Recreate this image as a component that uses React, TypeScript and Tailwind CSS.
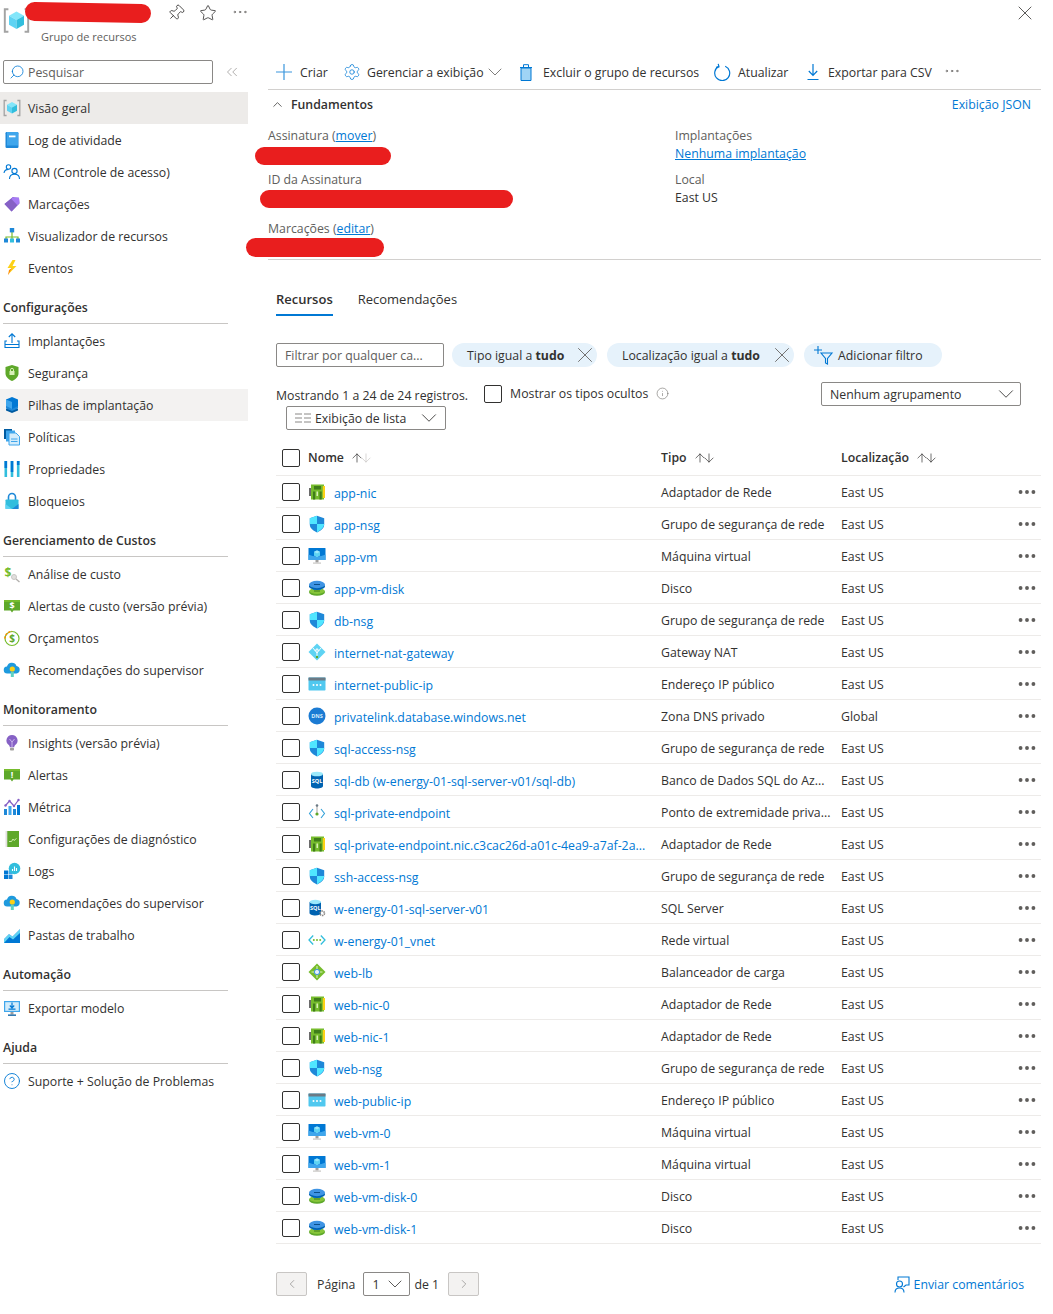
import React from 'react';
import { ArrowDown, ArrowUp, ChevronDown, ChevronLeft, ChevronRight, ChevronUp, ChevronsLeft, CircleHelp, Ellipsis, Info, Pin, Search, Settings, Star, X } from 'lucide-react';

type IconProps = { className?: string };

const Svg = ({ children, size = 18 }: { children: React.ReactNode; size?: number }) => (
  <svg width={size} height={size} viewBox="0 0 18 18" className="shrink-0">{children}</svg>
);

const CubeGroup = ({ size = 18 }: { size?: number }) => (
  <Svg size={size}>
    <path d="M3.600 1.500H1.200v15h2.400M14.400 1.500h2.400v15h-2.400" fill="none" stroke="#a3a3a3" strokeWidth="1.300" />
    <path d="M9 3l5 2.800L9 8.600 4 5.800z" fill="#83e6fa" />
    <path d="M4 5.800l5 2.800v6L4 11.800z" fill="#5ed3f3" />
    <path d="M14 5.800L9 8.600v6l5-2.800z" fill="#32bedd" />
  </Svg>
);
const LogIcon = () => (
  <Svg>
    <rect x="2.500" y="1" width="13" height="16" rx="1.200" fill="#1e88d8" />
    <rect x="4" y="1" width="11" height="13.500" fill="#3fa6ec" />
    <rect x="6" y="4.500" width="6.500" height="1.800" fill="#ffffff" />
  </Svg>
);
const IamIcon = () => (
  <Svg>
    <circle cx="5.500" cy="4" r="2.200" fill="none" stroke="#0078d4" strokeWidth="1.100" />
    <path d="M1 10c.4-2.400 2-3.600 4.500-3.600" fill="none" stroke="#0078d4" strokeWidth="1.100" />
    <circle cx="11.500" cy="8" r="2.600" fill="none" stroke="#0078d4" strokeWidth="1.100" />
    <path d="M6.500 16c0-3.200 2-4.800 5-4.800s5 1.600 5 4.800" fill="none" stroke="#0078d4" strokeWidth="1.100" />
  </Svg>
);
const TagIcon = () => (
  <Svg>
    <path d="M1.500 9L9.500 2.200l6.500.5.4 5.600-7.800 8.200z" fill="#7f5fd0" />
    <path d="M1.500 9l7 7.500 7.900-8.200-6-6.400z" fill="#8661c5" />
    <path d="M9.500 2.200l6.500.5.4 5.600-2 2-6-6.400z" fill="#a67af4" />
  </Svg>
);
const GraphIcon = () => (
  <Svg>
    <path d="M9 5v6M3 12.500V10h12v2.500M9 9.500v3" fill="none" stroke="#76bc2d" strokeWidth="1.200" />
    <rect x="6.800" y="1" width="4.400" height="4.400" fill="#1e88d8" />
    <rect x="1" y="11.500" width="4" height="4" fill="#1e88d8" />
    <rect x="7" y="11.500" width="4" height="4" fill="#32bedd" />
    <rect x="13" y="11.500" width="4" height="4" fill="#1e88d8" />
  </Svg>
);
const BoltIcon = () => (
  <Svg>
    <path d="M9.500 1L4.500 9h4l-3 6 8-8h-4l3-6z" fill="#fcd116" />
    <path d="M9 9l-3.500 6.500L5 16l1-5z" fill="#ff8c00" />
  </Svg>
);
const UploadIcon = () => (
  <Svg>
    <path d="M9 11V2M5.800 5L9 1.800 12.200 5" fill="none" stroke="#0078d4" strokeWidth="1.100" />
    <path d="M4 9H2v6.500h14V9h-2" fill="none" stroke="#0078d4" strokeWidth="1.100" />
    <path d="M2 12.500h14" stroke="#0078d4" strokeWidth="1" />
  </Svg>
);
const ShieldLock = () => (
  <Svg>
    <path d="M9 1l6.500 2v6.500c0 3.500-3.300 6-6.500 7.500-3.200-1.500-6.500-4-6.500-7.500V3z" fill="#5ea82a" />
    <rect x="6.500" y="7" width="5" height="4" fill="#d8f0b8" />
    <path d="M7.500 7V5.800a1.500 1.500 0 013 0V7" fill="none" stroke="#d8f0b8" />
  </Svg>
);
const StackIcon = () => (
  <Svg>
    <path d="M9 10.500l6 2.500v1.500L9 17l-6-2.500V13z" fill="#005ba1" />
    <path d="M9 6.500l6 2.500v3.500L9 15l-6-2.500V9z" fill="#1e88d8" />
    <path d="M9 1l6 2.500v6.500l-6 3-6-3V3.500z" fill="#0078d4" />
    <path d="M3 3.500l6 2.500v7l-6-3z" fill="#3fa6ec" />
  </Svg>
);
const PolicyIcon = () => (
  <Svg>
    <rect x="1" y="1" width="8" height="10" fill="#005ba1" />
    <rect x="3" y="2.500" width="9" height="11" fill="#3fa6ec" />
    <path d="M6 5h7l3.500 3.500V17H6z" fill="#d3ecfb" stroke="#3fa6ec" />
    <path d="M8 11h6.500M8 13.500h6.500" stroke="#3fa6ec" />
  </Svg>
);
const PropsIcon = () => (
  <Svg>
    <rect x="1.500" y="1" width="2.600" height="16" fill="#32bedd" />
    <rect x="1.500" y="1" width="2.600" height="7" fill="#0078d4" />
    <rect x="7.700" y="1" width="2.600" height="16" fill="#32bedd" />
    <rect x="7.700" y="1" width="2.600" height="11" fill="#0078d4" />
    <rect x="13.900" y="1" width="2.600" height="16" fill="#32bedd" />
    <rect x="13.900" y="1" width="2.600" height="4" fill="#0078d4" />
  </Svg>
);
const LockIcon = () => (
  <Svg>
    <path d="M5.500 8V5a3.500 3.500 0 017 0v3" fill="none" stroke="#1e88d8" strokeWidth="1.600" />
    <rect x="2.500" y="7.500" width="13" height="9.500" rx="0.800" fill="#32bedd" />
    <path d="M2.500 12l6.500 5H2.500z" fill="#5ed3f3" />
    <path d="M15.500 12L9 17h6.500z" fill="#1e88d8" />
  </Svg>
);
const CostIcon = () => (
  <Svg>
    <text x="5" y="11.500" textAnchor="middle" fontSize="12" fontWeight="700" fill="#76bc2d" fontFamily="Open Sans, sans-serif">$</text>
    <circle cx="11" cy="12" r="2.500" fill="#e1dfdd" stroke="#c8c6c4" />
    <path d="M13 14l3.500 3" stroke="#b3b0ad" strokeWidth="1.400" />
  </Svg>
);
const Flag = ({ mark }: { mark: string }) => (
  <Svg>
    <path d="M1 3h16v10.500H10.500L9 15.500l-1.500-2H1z" fill="#5ea82a" />
    <path d="M1 3h16v2H1z" fill="#76bc2d" />
    <text x="9" y="12" textAnchor="middle" fontSize="9" fontWeight="700" fill="#ffffff" fontFamily="Open Sans, sans-serif">{mark}</text>
  </Svg>
);
const BudgetIcon = () => (
  <Svg>
    <circle cx="9" cy="9.500" r="7" fill="none" stroke="#76bc2d" strokeWidth="1.200" />
    <path d="M2 9.500A7 7 0 019 2.500" fill="none" stroke="#ff8c00" strokeWidth="1.600" strokeDasharray="2 1.500" />
    <text x="9" y="13" textAnchor="middle" fontSize="10" fontWeight="700" fill="#5ea82a" fontFamily="Open Sans, sans-serif">$</text>
  </Svg>
);
const AdvisorIcon = () => (
  <Svg>
    <path d="M4.500 12.500a3.500 3.500 0 01-.5-7 5 5 0 019.500-.5 3.800 3.800 0 010 7.500z" fill="#1e9ade" />
    <circle cx="9.300" cy="8" r="2.600" fill="#fcd116" />
    <path d="M7.800 11h3v5h-3z" fill="#5ed3c3" />
  </Svg>
);
const BulbIcon = () => (
  <Svg>
    <path d="M9 1a5.500 5.500 0 00-3.200 10c.7.6 1 1.300 1 2.200h4.400c0-.9.3-1.600 1-2.200A5.500 5.500 0 009 1z" fill="#8661c5" />
    <path d="M6.500 5l2.500 3 2.500-3M9 8v5" fill="none" stroke="#d9c8f5" strokeWidth="0.800" />
    <rect x="7" y="13.800" width="4" height="2.800" rx="0.800" fill="#a19f9d" />
  </Svg>
);
const MetricsIcon = () => (
  <Svg>
    <rect x="1" y="11" width="3" height="6" fill="#1e88d8" />
    <rect x="5.500" y="8" width="3" height="9" fill="#3fa6ec" />
    <rect x="10" y="11" width="3" height="6" fill="#1e88d8" />
    <rect x="14" y="7" width="3" height="10" fill="#0078d4" />
    <path d="M2.500 7.500L6.500 3l4.500 5L15.500 2" fill="none" stroke="#8661c5" strokeWidth="1.200" />
    <circle cx="2.500" cy="7.500" r="1.200" fill="#8661c5" />
    <circle cx="6.500" cy="3" r="1.200" fill="#8661c5" />
    <circle cx="11" cy="8" r="1.200" fill="#8661c5" />
    <circle cx="15.500" cy="2" r="1.200" fill="#8661c5" />
  </Svg>
);
const DiagIcon = () => (
  <Svg>
    <rect x="3" y="1" width="13" height="16" fill="#5ea82a" />
    <rect x="2.500" y="1" width="1.800" height="16" fill="#e1dfdd" />
    <path d="M6 11.500h2.500l1.500-2.500 1 1.500 2.500-2" fill="none" stroke="#d8f0b8" strokeWidth="0.900" />
  </Svg>
);
const LogsIcon = () => (
  <Svg>
    <rect x="1" y="8.500" width="4" height="4" fill="#0078d4" />
    <rect x="1" y="13" width="4" height="4" fill="#0078d4" />
    <rect x="5.500" y="13" width="4" height="4" fill="#1e88d8" />
    <rect x="5.500" y="8.500" width="4" height="4" fill="#3fa6ec" />
    <circle cx="11.500" cy="6.500" r="5.800" fill="#32bedd" />
    <path d="M9.500 9V7M11.500 9V4.500M13.500 9V6" stroke="#ffffff" strokeWidth="1.100" />
  </Svg>
);
const WorkbookIcon = () => (
  <Svg>
    <path d="M1 1h16v16H1z" fill="#0078d4" />
    <path d="M1 13l5-5 3.500 2.500L17 3v4l-7 6.500-3.500-2.500L1 17z" fill="#5ed3f3" />
    <path d="M1 1h16v2L9.500 10.500 6 8l-5 5z" fill="#ffffff" />
  </Svg>
);
const ExportIcon = () => (
  <Svg>
    <rect x="1" y="2" width="16" height="11" fill="#3fa6ec" />
    <rect x="2.200" y="3.200" width="13.600" height="8.600" fill="#d3ecfb" />
    <path d="M9 3.500v5M6.800 6.500L9 8.800l2.200-2.300M5.500 10.200h7" fill="none" stroke="#0078d4" strokeWidth="1.200" />
    <path d="M7.500 13h3v2.500h-3z" fill="#a19f9d" />
    <rect x="5" y="15.500" width="8" height="1.300" fill="#005ba1" />
  </Svg>
);

const NicIcon = () => (
  <Svg>
    <rect x="1" y="5" width="2" height="8" fill="#6b6b6b" />
    <rect x="3" y="1.500" width="13" height="15" fill="#76bc2d" />
    <rect x="14.800" y="3" width="2.200" height="12" fill="#fcd116" />
    <rect x="6" y="3" width="7" height="3.500" fill="#3f7d1a" />
    <rect x="5" y="8.500" width="2.200" height="8" fill="#3f7d1a" />
    <rect x="8.500" y="8.500" width="1.500" height="4.500" fill="#d8f0b8" />
    <rect x="11.500" y="8.500" width="2.200" height="8" fill="#3f7d1a" />
  </Svg>
);
const NsgIcon = () => (
  <Svg>
    <path d="M9 .8l7.200 2.400v6.200c0 3.900-3.600 6.400-7.200 8-3.600-1.600-7.200-4.100-7.200-8V3.200z" fill="#1e88d8" />
    <path d="M9 .8L1.800 3.200V9H9z" fill="#50e6ff" />
    <path d="M9 9h7.200c-.3 3.700-3.700 6-7.200 8.400z" fill="#50e6ff" />
  </Svg>
);
const VmIcon = () => (
  <Svg>
    <rect x=".5" y="1" width="17" height="12" rx=".6" fill="#0078d4" />
    <path d="M.5 7.500c5 2.500 12 2.500 17 0V13H.5z" fill="#3fa6ec" />
    <path d="M9 3.200l3 1.600v3.400l-3 1.700-3-1.700V4.800z" fill="#9be9fb" />
    <path d="M6 4.800l3 1.700 3-1.700v3.400l-3 1.700-3-1.700z" fill="#5ed3f3" />
    <path d="M7.500 13h3v2.500h-3z" fill="#a19f9d" />
    <rect x="5" y="15.500" width="8" height="1.200" fill="#c8c6c4" />
  </Svg>
);
const DiskIcon = () => (
  <Svg>
    <ellipse cx="9" cy="13" rx="8" ry="3.800" fill="#5ea82a" />
    <ellipse cx="9" cy="12" rx="7.500" ry="3" fill="#86c53a" />
    <rect x="6" y="11.500" width="6" height="1" fill="#3f7d1a" />
    <rect x="5" y="6" width="8" height="5" fill="#1e88d8" />
    <ellipse cx="9" cy="7.200" rx="8" ry="3.700" fill="#0063b1" />
    <ellipse cx="9" cy="5.500" rx="8" ry="3.700" fill="#3f94e4" />
    <rect x="6" y="5" width="6" height="1" fill="#0b4f8a" />
  </Svg>
);
const NatIcon = () => (
  <Svg>
    <path d="M9 .5L17.500 9 9 17.500.5 9z" fill="#5ed3f3" />
    <path d="M9 14V6M6.800 8L9 5.500 11.200 8" fill="none" stroke="#ffffff" strokeWidth="1" />
    <path d="M5 5L9 10l4-5" fill="none" stroke="#ffffff" strokeWidth="0.900" />
    <circle cx="9" cy="14" r="1.200" fill="#5ea82a" />
  </Svg>
);
const IpIcon = () => (
  <Svg>
    <rect x=".5" y="2.500" width="17" height="13" rx=".7" fill="#50c8ef" />
    <rect x=".5" y="2.500" width="17" height="3" fill="#6b7a85" />
    <circle cx="5.500" cy="10" r="1" fill="#ffffff" />
    <circle cx="9" cy="10" r="1" fill="#ffffff" />
    <circle cx="12.500" cy="10" r="1" fill="#ffffff" />
  </Svg>
);
const DnsIcon = () => (
  <Svg>
    <circle cx="9" cy="9" r="8.500" fill="#1b7bd3" />
    <text x="9" y="11" textAnchor="middle" fontSize="5.500" fontWeight="700" fill="#d3ecfb" fontFamily="Open Sans, sans-serif">DNS</text>
  </Svg>
);
const SqlDbIcon = () => (
  <Svg>
    <path d="M3 3v12c0 1.400 2.700 2.500 6 2.500s6-1.100 6-2.500V3z" fill="#0063b1" />
    <ellipse cx="9" cy="3" rx="6" ry="2.300" fill="#9be9fb" />
    <text x="9" y="12" textAnchor="middle" fontSize="5.500" fontWeight="700" fill="#ffffff" fontFamily="Open Sans, sans-serif">SQL</text>
  </Svg>
);
const EndpointIcon = () => (
  <Svg>
    <path d="M5 6L1.500 10.500 5 15M13 6l3.500 4.500L13 15" fill="none" stroke="#32a0d8" strokeWidth="1.100" />
    <path d="M9 3v8" stroke="#a19f9d" strokeWidth="1" />
    <circle cx="9" cy="2.500" r="1.300" fill="#6b7a85" />
    <circle cx="9" cy="11" r="1.600" fill="#5ea82a" />
  </Svg>
);
const SqlServerIcon = () => (
  <Svg>
    <path d="M1.500 3v11c0 1.300 2.500 2.500 5.800 2.500s5.700-1.200 5.700-2.500V3z" fill="#0063b1" />
    <ellipse cx="7.300" cy="3" rx="5.800" ry="2.200" fill="#9be9fb" />
    <text x="7.300" y="11" textAnchor="middle" fontSize="5.500" fontWeight="700" fill="#ffffff" fontFamily="Open Sans, sans-serif">SQL</text>
    <circle cx="14.300" cy="14.300" r="2.200" fill="none" stroke="#8a8886" strokeWidth="1.600" strokeDasharray="1.400 .7" />
  </Svg>
);
const VnetIcon = () => (
  <Svg>
    <path d="M5.200 4.500L1 9l4.200 4.500M12.800 4.500L17 9l-4.200 4.500" fill="none" stroke="#32bedd" strokeWidth="1.300" />
    <circle cx="5.800" cy="9" r="1" fill="#76bc2d" />
    <circle cx="9" cy="9" r="1" fill="#76bc2d" />
    <circle cx="12.200" cy="9" r="1" fill="#76bc2d" />
  </Svg>
);
const LbIcon = () => (
  <Svg>
    <path d="M9 .5L17.500 9 9 17.500.5 9z" fill="#76bc2d" />
    <path d="M9 3v3M3.500 9h3M11.500 9h3M9 12v3" stroke="#d8f0b8" strokeWidth="1.100" />
    <circle cx="9" cy="9" r="2.600" fill="#e6f2fb" stroke="#3f94e4" />
  </Svg>
);

const PlusIcon = ({ className }: IconProps) => (
  <svg width="16" height="16" viewBox="0 0 16 16" className={className} fill="none" stroke="#3a96dd" strokeWidth="1.200">
    <path d="M0 8h16M8 0v16" />
  </svg>
);
const TrashIcon = ({ className }: IconProps) => (
  <svg width="14" height="17" viewBox="0 0 14 17" className={className}>
    <path d="M2 4h10v12.500H2z" fill="#9fd4f5" stroke="#0078d4" />
    <path d="M1 3.500h12M4.500 3V.7h5V3" fill="none" stroke="#0078d4" />
  </svg>
);
const RefreshIcon = ({ className }: IconProps) => (
  <svg width="17" height="18" viewBox="0 0 17 18" className={className} fill="none" stroke="#0078d4" strokeWidth="1.200">
    <path d="M11.200 3.200a7.500 7.500 0 11-6.400.2" />
    <path d="M4.200.8l.8 3-3 .6" />
  </svg>
);
const DownloadIcon = ({ className }: IconProps) => (
  <svg width="16" height="18" viewBox="0 0 16 18" className={className} fill="none" stroke="#0078d4" strokeWidth="1.200">
    <path d="M8 1v11M3.800 8L8 12.300 12.200 8M2.500 16.500h11" />
  </svg>
);
const AddFilterIcon = () => (
  <svg width="20" height="20" viewBox="0 0 20 20" fill="none" stroke="#0078d4" strokeWidth="1.100" className="shrink-0">
    <path d="M0 5h8M4 1v8" />
    <path d="M7 8h11l-4.500 5.500V19l-2-1v-4.500z" />
  </svg>
);
const FeedbackIcon = () => (
  <svg width="16" height="17" viewBox="0 0 16 17" fill="none" stroke="#0078d4" strokeWidth="1.100" className="shrink-0">
    <path d="M4 4V1h11v8h-3l-2.500 2" />
    <circle cx="5.500" cy="8" r="3" fill="#ffffff" />
    <path d="M1 16.500c0-3 2-4.500 4.500-4.500s4.500 1.500 4.500 4.500" />
  </svg>
);

const nav = [
  {
    items: [
      { label: 'Visão geral', icon: <CubeGroup />, active: 'bg-[#edebe9]' },
      { label: 'Log de atividade', icon: <LogIcon /> },
      { label: 'IAM (Controle de acesso)', icon: <IamIcon /> },
      { label: 'Marcações', icon: <TagIcon /> },
      { label: 'Visualizador de recursos', icon: <GraphIcon /> },
      { label: 'Eventos', icon: <BoltIcon /> },
    ],
  },
  {
    title: 'Configurações',
    items: [
      { label: 'Implantações', icon: <UploadIcon /> },
      { label: 'Segurança', icon: <ShieldLock /> },
      { label: 'Pilhas de implantação', icon: <StackIcon />, active: 'bg-[#f3f2f1]' },
      { label: 'Políticas', icon: <PolicyIcon /> },
      { label: 'Propriedades', icon: <PropsIcon /> },
      { label: 'Bloqueios', icon: <LockIcon /> },
    ],
  },
  {
    title: 'Gerenciamento de Custos',
    items: [
      { label: 'Análise de custo', icon: <CostIcon /> },
      { label: 'Alertas de custo (versão prévia)', icon: <Flag mark="$" /> },
      { label: 'Orçamentos', icon: <BudgetIcon /> },
      { label: 'Recomendações do supervisor', icon: <AdvisorIcon /> },
    ],
  },
  {
    title: 'Monitoramento',
    items: [
      { label: 'Insights (versão prévia)', icon: <BulbIcon /> },
      { label: 'Alertas', icon: <Flag mark="!" /> },
      { label: 'Métrica', icon: <MetricsIcon /> },
      { label: 'Configurações de diagnóstico', icon: <DiagIcon /> },
      { label: 'Logs', icon: <LogsIcon /> },
      { label: 'Recomendações do supervisor', icon: <AdvisorIcon /> },
      { label: 'Pastas de trabalho', icon: <WorkbookIcon /> },
    ],
  },
  {
    title: 'Automação',
    items: [{ label: 'Exportar modelo', icon: <ExportIcon /> }],
  },
  {
    title: 'Ajuda',
    items: [{ label: 'Suporte + Solução de Problemas', icon: <CircleHelp size={18} strokeWidth={1.2} className="text-[#0078d4]" /> }],
  },
];

const resources = [
  { name: 'app-nic', type: 'Adaptador de Rede', icon: <NicIcon /> },
  { name: 'app-nsg', type: 'Grupo de segurança de rede', icon: <NsgIcon /> },
  { name: 'app-vm', type: 'Máquina virtual', icon: <VmIcon /> },
  { name: 'app-vm-disk', type: 'Disco', icon: <DiskIcon /> },
  { name: 'db-nsg', type: 'Grupo de segurança de rede', icon: <NsgIcon /> },
  { name: 'internet-nat-gateway', type: 'Gateway NAT', icon: <NatIcon /> },
  { name: 'internet-public-ip', type: 'Endereço IP público', icon: <IpIcon /> },
  { name: 'privatelink.database.windows.net', type: 'Zona DNS privado', icon: <DnsIcon />, location: 'Global' },
  { name: 'sql-access-nsg', type: 'Grupo de segurança de rede', icon: <NsgIcon /> },
  { name: 'sql-db (w-energy-01-sql-server-v01/sql-db)', type: 'Banco de Dados SQL do Az...', icon: <SqlDbIcon /> },
  { name: 'sql-private-endpoint', type: 'Ponto de extremidade priva...', icon: <EndpointIcon /> },
  { name: 'sql-private-endpoint.nic.c3cac26d-a01c-4ea9-a7af-2a...', type: 'Adaptador de Rede', icon: <NicIcon /> },
  { name: 'ssh-access-nsg', type: 'Grupo de segurança de rede', icon: <NsgIcon /> },
  { name: 'w-energy-01-sql-server-v01', type: 'SQL Server', icon: <SqlServerIcon /> },
  { name: 'w-energy-01_vnet', type: 'Rede virtual', icon: <VnetIcon /> },
  { name: 'web-lb', type: 'Balanceador de carga', icon: <LbIcon /> },
  { name: 'web-nic-0', type: 'Adaptador de Rede', icon: <NicIcon /> },
  { name: 'web-nic-1', type: 'Adaptador de Rede', icon: <NicIcon /> },
  { name: 'web-nsg', type: 'Grupo de segurança de rede', icon: <NsgIcon /> },
  { name: 'web-public-ip', type: 'Endereço IP público', icon: <IpIcon /> },
  { name: 'web-vm-0', type: 'Máquina virtual', icon: <VmIcon /> },
  { name: 'web-vm-1', type: 'Máquina virtual', icon: <VmIcon /> },
  { name: 'web-vm-disk-0', type: 'Disco', icon: <DiskIcon /> },
  { name: 'web-vm-disk-1', type: 'Disco', icon: <DiskIcon /> },
];

const Checkbox = () => <span className="block w-[18px] h-[18px] shrink-0 rounded-[2px] border border-[#323130] bg-white" />;

const SortIcon = ({ dim }: { dim?: boolean }) => (
  <span className="flex ml-[6px]">
    <ArrowUp size={14} strokeWidth={1.2} className="text-[#323130]" />
    <ArrowDown size={14} strokeWidth={1.2} className={dim ? '-ml-[5px] text-[#c8c6c4]' : '-ml-[5px] text-[#323130]'} />
  </span>
);

const Chip = ({ label, value, width }: { label: string; value: string; width: string }) => (
  <div className={`flex items-center h-6 rounded-full bg-[#e6f2fb] pl-[15px] ${width}`}>
    <span className="pt-[2px]">{label} <b className="font-bold">{value}</b></span>
    <X size={26} strokeWidth={0.8} className="ml-auto -mr-[1px] text-[#605e5c]" />
  </div>
);

const App = () => {
  return (
    <div className="w-[1053px] h-[1314px] overflow-hidden bg-white text-[#323130] text-[12.3px] leading-[18px] font-['Open_Sans',sans-serif]">
      <header className="relative flex h-[60px]">
        <div className="pl-[3px] pt-[7px]"><CubeGroup size={27} /></div>
        <div className="ml-[11px] pt-[28px] text-[11px] text-[#605e5c]">Grupo de recursos</div>
        <div className="absolute left-[25px] top-[3px] w-[126px] h-[19px] rounded-full bg-[#e91e1e] rotate-[1deg]" />
        <div className="ml-[30px] flex items-start pt-[4px] gap-[14px] text-[#323130]">
          <Pin size={18} strokeWidth={1.1} className="rotate-45" />
          <Star size={18} strokeWidth={1.1} />
          <Ellipsis size={18} strokeWidth={1} className="-mt-[1px] text-[#605e5c]" />
        </div>
        <X size={24} strokeWidth={0.8} className="ml-auto mr-[16px] mt-px text-[#323130]" />
      </header>

      <div className="flex">
        <aside className="w-[248px] shrink-0">
          <div className="flex items-center pl-[3px] mb-2">
            <div className="flex items-center w-[210px] h-6 rounded-[2px] border border-[#8a8886] pl-[5px] text-[#605e5c]">
              <Search size={16} strokeWidth={1.2} className="-scale-x-100 text-[#0078d4] mr-[3px]" />
              <span className="pt-[2px]">Pesquisar</span>
            </div>
            <ChevronsLeft size={18} strokeWidth={0.9} className="ml-[10px] text-[#8a8886]" />
          </div>
          {nav.map((group, i) => (
            <section key={i}>
              {group.title && (
                <div className="flex items-end h-10 ml-[3px] mr-[20px] mb-px pb-[6px] border-b border-[#c8c6c4] font-semibold text-[#323130]">
                  {group.title}
                </div>
              )}
              {group.items.map((item) => (
                <div key={item.label} className={`flex items-center h-8 pl-[3px] gap-[7px] ${item.active ?? ''}`}>
                  {item.icon}
                  <span className="pt-[2px] whitespace-nowrap">{item.label}</span>
                </div>
              ))}
            </section>
          ))}
        </aside>

        <main className="relative w-[793px] pl-5">
          <div className="flex items-start h-[30px] border-b border-[#d2d0ce] pl-[8px] whitespace-nowrap">
            <div className="flex items-center h-6 w-[67px]">
              <PlusIcon className="mr-2 shrink-0" /><span className="pt-[2px]">Criar</span>
            </div>
            <div className="flex items-center h-6 w-[176px]">
              <Settings size={18} strokeWidth={1} className="text-[#0078d4] mr-[6px] shrink-0" /><span className="pt-[2px]">Gerenciar a exibição</span>
              <ChevronDown size={24} strokeWidth={0.8} className="-ml-[1px] text-[#605e5c] shrink-0" />
            </div>
            <div className="flex items-center h-6 w-[195px]">
              <TrashIcon className="mr-[10px] shrink-0" /><span className="pt-[2px]">Excluir o grupo de recursos</span>
            </div>
            <div className="flex items-center h-6 w-[90px]">
              <RefreshIcon className="mr-[7px] shrink-0" /><span className="pt-[2px]">Atualizar</span>
            </div>
            <div className="flex items-center h-6 w-[139px] pl-[1px]">
              <DownloadIcon className="mr-[7px] shrink-0" /><span className="pt-[2px]">Exportar para CSV</span>
            </div>
            <Ellipsis size={18} strokeWidth={1} className="mt-[2px] text-[#605e5c]" />
          </div>

          <div className="flex items-center justify-between h-[28px] pl-[2px] pr-[10px]">
            <div className="flex items-center font-semibold">
              <ChevronUp size={15} strokeWidth={1.2} className="mr-[6px]" /><span className="pt-[2px]">Fundamentos</span>
            </div>
            <a className="pt-[2px] text-[#0078d4]">Exibição JSON</a>
          </div>

          <div className="relative flex h-[142px] border-b border-[#d2d0ce] pt-[9px]">
            <div className="w-[407px] text-[#605e5c]">
              <div>Assinatura (<span className="text-[#0078d4] underline">mover</span>)</div>
              <div className="mt-[26px]">ID da Assinatura</div>
              <div className="mt-[31px]">Marcações (<span className="text-[#0078d4] underline">editar</span>)</div>
            </div>
            <div>
              <div className="text-[#605e5c]">Implantações</div>
              <div className="text-[#0078d4] underline">Nenhuma implantação</div>
              <div className="mt-[8px] text-[#605e5c]">Local</div>
              <div>East US</div>
            </div>
            <div className="absolute left-[-13px] top-[29px] w-[136px] h-[18px] rounded-full bg-[#e91e1e]" />
            <div className="absolute left-[-8px] top-[72px] w-[253px] h-[18px] rounded-full bg-[#e91e1e]" />
            <div className="absolute left-[-22px] top-[120px] w-[138px] h-[19px] rounded-full bg-[#e91e1e]" />
          </div>

          <div className="pl-2">
            <div className="flex gap-[25px] pt-[30px] text-[13px]">
              <div className="pb-[6px] border-b-2 border-[#0078d4] font-semibold">Recursos</div>
              <div>Recomendações</div>
            </div>

            <div className="flex items-center mt-[27px] whitespace-nowrap">
              <div className="flex items-center w-[168px] h-6 rounded-[2px] border border-[#8a8886] pl-2 text-[#605e5c]"><span className="pt-[2px]">Filtrar por qualquer ca...</span></div>
              <div className="ml-2"><Chip label="Tipo igual a" value="tudo" width="w-[145px]" /></div>
              <div className="ml-[10px]"><Chip label="Localização igual a" value="tudo" width="w-[187px]" /></div>
              <div className="flex items-center ml-[10px] w-[138px] h-6 rounded-full bg-[#e6f2fb] pl-[10px] gap-[4px]">
                <AddFilterIcon /><span className="pt-[2px]">Adicionar filtro</span>
              </div>
            </div>

            <div className="flex justify-between mt-[15px] pr-5 whitespace-nowrap">
              <div>
                <div className="flex items-start h-6">
                  <span className="mt-[5px]">Mostrando 1 a 24 de 24 registros.</span>
                  <span className="ml-4 mt-[3px]"><Checkbox /></span>
                  <span className="ml-2 mt-[3px]">Mostrar os tipos ocultos</span>
                  <Info size={13} strokeWidth={1} className="ml-[8px] mt-[5px] text-[#605e5c]" />
                </div>
                <div className="flex items-center ml-[10px] w-[160px] h-6 rounded-[2px] border border-[#8a8886] pl-2 pr-[3px]">
                  <svg width="16" height="10" viewBox="0 0 16 10" className="mr-[4px] shrink-0" fill="none" stroke="#8a8886">
                    <path d="M0 1h7M9 1h7M0 5h7M9 5h7M0 9h7M9 9h7" />
                  </svg>
                  <span className="pt-[2px]">Exibição de lista</span>
                  <ChevronDown size={26} strokeWidth={0.8} className="ml-auto text-[#323130]" />
                </div>
              </div>
              <div className="flex items-center w-[200px] h-6 rounded-[2px] border border-[#8a8886] pl-2 pr-[1px]">
                <span className="pt-[2px]">Nenhum agrupamento</span>
                <ChevronDown size={26} strokeWidth={0.8} className="ml-auto text-[#323130]" />
              </div>
            </div>

            <div className="flex items-center h-9 mt-[10px] border-b border-[#edebe9] font-semibold whitespace-nowrap">
              <div className="flex items-center w-[385px] pl-[6px]">
                <Checkbox />
                <span className="ml-2">Nome</span>
                <SortIcon dim />
              </div>
              <div className="flex items-center w-[180px]">Tipo<SortIcon /></div>
              <div className="flex items-center">Localização<SortIcon /></div>
            </div>

            {resources.map((r) => (
              <div key={r.name} className="flex items-center h-8 pt-[2px] border-b border-[#edebe9] whitespace-nowrap">
                <div className="flex items-center w-[385px] pl-[6px] mt-px">
                  <span className="mb-[2px]"><Checkbox /></span>
                  <span className="ml-2 mb-[2px]">{r.icon}</span>
                  <span className="ml-2 pt-px text-[#0078d4]">{r.name}</span>
                </div>
                <div className="w-[180px]">{r.type}</div>
                <div>{r.location ?? 'East US'}</div>
                <Ellipsis size={22} strokeWidth={2.2} className="ml-auto mr-[3px] mb-[2px] text-[#605e5c]" />
              </div>
            ))}

            <div className="flex items-center h-6 mt-7 whitespace-nowrap">
              <div className="flex items-center justify-center w-[31px] h-6 rounded-[2px] border border-[#c8c6c4] bg-[#f3f2f1]">
                <ChevronLeft size={14} strokeWidth={1.2} className="text-[#8a8886]" />
              </div>
              <span className="ml-[10px] pt-[2px]">Página</span>
              <div className="flex items-center ml-2 w-[47px] h-6 rounded-[2px] border border-[#8a8886] pl-2">
                <span className="pt-[2px]">1</span><ChevronDown size={24} strokeWidth={0.8} className="ml-auto mr-[2px]" />
              </div>
              <span className="ml-1 pt-[2px]">de 1</span>
              <div className="flex items-center justify-center ml-[9px] w-[31px] h-6 rounded-[2px] border border-[#c8c6c4] bg-[#f3f2f1]">
                <ChevronRight size={14} strokeWidth={1.2} className="text-[#8a8886]" />
              </div>
              <div className="flex items-center ml-auto mr-[17px] gap-[4px] text-[#0078d4]">
                <FeedbackIcon /><span className="pt-[2px]">Enviar comentários</span>
              </div>
            </div>
          </div>
        </main>
      </div>
    </div>
  );
};

export default App;
